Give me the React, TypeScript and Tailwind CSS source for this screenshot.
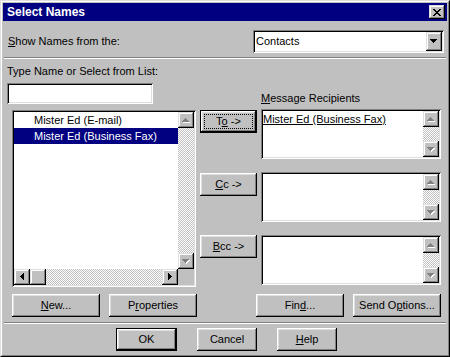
import React from "react";

const RAISED =
  "shadow-[inset_-1px_-1px_0_#000000,inset_1px_1px_0_#ffffff,inset_-2px_-2px_0_#808080,inset_2px_2px_0_#dfdfdf]";
const SCROLLBTN =
  "shadow-[inset_-1px_-1px_0_#000000,inset_1px_1px_0_#dfdfdf,inset_-2px_-2px_0_#808080,inset_2px_2px_0_#ffffff]";
const SUNKEN =
  "shadow-[inset_1px_1px_0_#808080,inset_-1px_-1px_0_#ffffff,inset_2px_2px_0_#000000,inset_-2px_-2px_0_#dfdfdf]";
const DITHER =
  "bg-[repeating-conic-gradient(#c0c0c0_0_25%,#ffffff_0_50%)] bg-[length:2px_2px]";

type Dir = "up" | "down" | "left" | "right";

function rectsFor(dir: Dir): [number, number, number, number][] {
  switch (dir) {
    case "up":
      return [
        [3, 0, 1, 1],
        [2, 1, 3, 1],
        [1, 2, 5, 1],
        [0, 3, 7, 1],
      ];
    case "down":
      return [
        [0, 0, 7, 1],
        [1, 1, 5, 1],
        [2, 2, 3, 1],
        [3, 3, 1, 1],
      ];
    case "left":
      return [
        [0, 3, 1, 1],
        [1, 2, 1, 3],
        [2, 1, 1, 5],
        [3, 0, 1, 7],
      ];
    default:
      return [
        [0, 0, 1, 7],
        [1, 1, 1, 5],
        [2, 2, 1, 3],
        [3, 3, 1, 1],
      ];
  }
}

function Arrow({ dir, disabled }: { dir: Dir; disabled?: boolean }) {
  const horiz = dir === "left" || dir === "right";
  const w = horiz ? 4 : 7;
  const h = horiz ? 7 : 4;
  const r = rectsFor(dir);
  return (
    <svg width={w + 1} height={h + 1} viewBox={`0 0 ${w + 1} ${h + 1}`} shapeRendering="crispEdges">
      {disabled &&
        r.map(([x, y, rw, rh], i) => (
          <rect key={"s" + i} x={x + 1} y={y + 1} width={rw} height={rh} fill="#ffffff" />
        ))}
      {r.map(([x, y, rw, rh], i) => (
        <rect key={i} x={x} y={y} width={rw} height={rh} fill={disabled ? "#808080" : "#000000"} />
      ))}
    </svg>
  );
}

function ScrollBtn({ dir, disabled }: { dir: Dir; disabled?: boolean }) {
  return (
    <div className={`w-[16px] h-[16px] shrink-0 bg-[#c0c0c0] ${SCROLLBTN} flex items-center justify-center`}>
      <Arrow dir={dir} disabled={disabled} />
    </div>
  );
}

function VScroll() {
  return (
    <div className="w-[16px] shrink-0 flex flex-col">
      <ScrollBtn dir="up" disabled />
      <div className={`flex-1 ${DITHER}`} />
      <ScrollBtn dir="down" disabled />
    </div>
  );
}

function Btn({
  children,
  className = "",
  def,
  focus,
}: {
  children: React.ReactNode;
  className?: string;
  def?: boolean;
  focus?: boolean;
}) {
  if (def) {
    return (
      <div className={`border border-black shrink-0 ${className}`}>
        <div className={`w-full h-full ${RAISED} flex items-center justify-center relative`}>
          {focus && <div className="absolute inset-[3px] border border-dotted border-black" />}
          <span>{children}</span>
        </div>
      </div>
    );
  }
  return (
    <div className={`${RAISED} shrink-0 flex items-center justify-center ${className}`}>
      <span>{children}</span>
    </div>
  );
}

function RecipientBox({ children }: { children?: React.ReactNode }) {
  return (
    <div className={`w-[180px] h-[50px] p-[2px] bg-white ${SUNKEN} flex`}>
      <div className="flex-1 leading-[16px]">{children}</div>
      <VScroll />
    </div>
  );
}

function CloseGlyph() {
  const rows = [
    [0, 1, 6, 7],
    [1, 2, 5, 6],
    [2, 3, 4, 5],
    [3, 4],
    [2, 3, 4, 5],
    [1, 2, 5, 6],
    [0, 1, 6, 7],
  ];
  return (
    <svg width="8" height="7" viewBox="0 0 8 7" shapeRendering="crispEdges">
      {rows.map((xs, y) =>
        xs.map((x) => <rect key={`${x}-${y}`} x={x} y={y} width={1} height={1} fill="#000" />)
      )}
    </svg>
  );
}

export default function App() {
  return (
    <div className="w-[450px] h-[357px] bg-[#c0c0c0] border border-t-[#dfdfdf] border-l-[#dfdfdf] border-r-black border-b-black font-['Liberation_Sans',Arial,sans-serif] text-[11px] leading-[13px] text-black select-none">
      <div className="h-full border border-t-white border-l-white border-r-[#808080] border-b-[#808080] p-[1px] flex flex-col">
        {/* Title bar */}
        <div className="h-[18px] shrink-0 bg-[#000080] flex items-center justify-between pl-[4px] pr-[2px]">
          <span className="text-white font-bold text-[12px] leading-[14px]">Select Names</span>
          <div className={`w-[16px] h-[14px] bg-[#c0c0c0] ${SCROLLBTN} flex items-center justify-center`}>
            <CloseGlyph />
          </div>
        </div>

        {/* Show names row */}
        <div className="flex items-center mt-[9px] h-[23px] shrink-0">
          <span className="ml-[5px]">
            <span className="underline">S</span>how Names from the:
          </span>
          <div className={`ml-auto mr-[3px] w-[191px] h-[23px] p-[2px] bg-white ${SUNKEN} flex`}>
            <div className="flex-1 flex items-center pl-[1px]">Contacts</div>
            <div className={`w-[16px] h-full bg-[#c0c0c0] ${SCROLLBTN} flex items-center justify-center`}>
              <Arrow dir="down" />
            </div>
          </div>
        </div>

        {/* separator */}
        <div className="mt-[4px] mx-[1px] h-[2px] shrink-0 border-t border-t-[#808080] border-b border-b-white" />

        {/* main section */}
        <div className="flex h-[228px] shrink-0">
          {/* left */}
          <div className="ml-[4px] w-[189px] flex flex-col">
            <div className="mt-[6px] h-[13px]">Type Name or Select from List:</div>
            <div className={`mt-[5px] w-[146px] h-[21px] bg-white ${SUNKEN}`} />
            <div className={`mt-[6px] ml-[5px] w-[184px] h-[177px] p-[2px] bg-white ${SUNKEN} flex flex-col`}>
              <div className="flex-1 flex">
                <div className="flex-1 flex flex-col">
                  <div className="h-[16px] leading-[16px] pl-[20px]">Mister Ed (E-mail)</div>
                  <div className="h-[16px] leading-[16px] pl-[20px] bg-[#000080] text-white">
                    Mister Ed (Business Fax)
                  </div>
                </div>
                <VScroll />
              </div>
              <div className="h-[16px] flex">
                <ScrollBtn dir="left" />
                <div className={`w-[16px] h-[16px] bg-[#c0c0c0] ${SCROLLBTN}`} />
                <div className={`flex-1 ${DITHER}`} />
                <ScrollBtn dir="right" />
                <div className="w-[16px] h-[16px] bg-[#c0c0c0]" />
              </div>
            </div>
          </div>

          {/* right */}
          <div className="ml-[4px] flex flex-col">
            <div className="mt-[33px] h-[13px] pl-[61px]">
              <span className="underline">M</span>essage Recipients
            </div>
            <div className="mt-[4px] flex gap-[4px]">
              <Btn className="w-[57px] h-[23px] mt-[1px]" def focus>
                T<span className="underline">o</span> -&gt;
              </Btn>
              <RecipientBox>
                <span className="underline">Mister Ed (Business Fax)</span>
              </RecipientBox>
            </div>
            <div className="mt-[13px] flex gap-[4px]">
              <Btn className="w-[57px] h-[23px] mt-[1px]">
                <span className="underline">C</span>c -&gt;
              </Btn>
              <RecipientBox />
            </div>
            <div className="mt-[13px] flex gap-[4px]">
              <Btn className="w-[57px] h-[23px]">
                <span className="underline">B</span>cc -&gt;
              </Btn>
              <RecipientBox />
            </div>
          </div>
        </div>

        {/* bottom buttons */}
        <div className="mt-[7px] h-[23px] flex shrink-0">
          <Btn className="ml-[9px] w-[88px] h-[23px]">
            <span className="underline">N</span>ew...
          </Btn>
          <Btn className="ml-[9px] w-[88px] h-[23px]">
            P<span className="underline">r</span>operties
          </Btn>
          <Btn className="ml-[59px] w-[88px] h-[23px]">
            Fin<span className="underline">d</span>...
          </Btn>
          <Btn className="ml-[9px] w-[88px] h-[23px]">
            Send O<span className="underline">p</span>tions...
          </Btn>
        </div>

        <div className="mt-[5px] mx-[1px] h-[2px] shrink-0 border-t border-t-[#808080] border-b border-b-white" />

        <div className="mt-[4px] h-[23px] flex shrink-0">
          <Btn className="ml-[113px] w-[61px] h-[23px]" def>
            OK
          </Btn>
          <Btn className="ml-[20px] w-[60px] h-[23px]">Cancel</Btn>
          <Btn className="ml-[20px] w-[60px] h-[23px]">
            <span className="underline">H</span>elp
          </Btn>
        </div>
      </div>
    </div>
  );
}
